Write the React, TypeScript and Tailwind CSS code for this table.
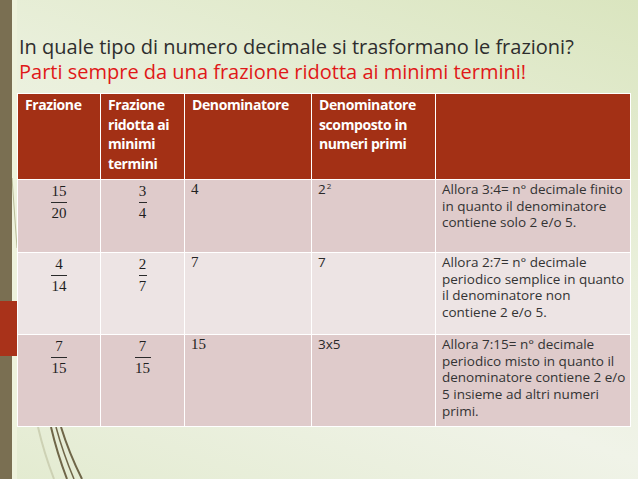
import React from "react";

type Frac = { n: string; d: string };

const ROWS: {
  a: Frac;
  b: Frac;
  den: string;
  scomp: React.ReactNode;
  note: string;
  bg: string;
  h: string;
}[] = [
  {
    a: { n: "15", d: "20" },
    b: { n: "3", d: "4" },
    den: "4",
    scomp: (
      <>
        2<span className="inline-block align-top text-[8px] leading-[10px] ml-[1px]">2</span>
      </>
    ),
    note: "Allora 3:4= n° decimale finito in quanto il denominatore contiene solo 2 e/o 5.",
    bg: "bg-[#dfcbcb]",
    h: "h-[73px]",
  },
  {
    a: { n: "4", d: "14" },
    b: { n: "2", d: "7" },
    den: "7",
    scomp: "7",
    note: "Allora 2:7= n° decimale periodico semplice in quanto il denominatore non contiene 2 e/o 5.",
    bg: "bg-[#ede4e4]",
    h: "h-[82px]",
  },
  {
    a: { n: "7", d: "15" },
    b: { n: "7", d: "15" },
    den: "15",
    scomp: "3x5",
    note: "Allora 7:15= n° decimale periodico misto in quanto il denominatore contiene 2 e/o 5 insieme ad altri numeri primi.",
    bg: "bg-[#dfcbcb]",
    h: "h-[92px]",
  },
];

function Fraction({ f }: { f: Frac }) {
  return (
    <div className="flex flex-col items-center text-[15px] text-[#1e1e1e] font-['Liberation_Serif',serif] pt-[4px]">
      <span className="leading-[15px]">{f.n}</span>
      <span className="block h-[1px] bg-[#2a2a2a] my-[3px] self-center" style={{ width: f.n.length > 1 || f.d.length > 1 ? 16 : 8 }} />
      <span className="leading-[15px]">{f.d}</span>
    </div>
  );
}

export default function App() {
  return (
    <div className="relative w-[638px] h-[479px] overflow-hidden flex bg-[linear-gradient(200deg,#dae5bf_0%,#eaf0dc_40%,#f0f3e8_65%,#e3ebd0_100%)]">
      {/* left decorative strip */}
      <div className="w-[12px] h-full bg-[#7a6f52] shrink-0" />
      <div className="w-[5px] h-full bg-[#eef2dc] shrink-0" />
      <div className="absolute left-0 top-[301px] w-[17px] h-[55px] bg-[#a9321a]" />
      <svg className="absolute left-[12px] top-[178px]" width="5" height="90" viewBox="0 0 5 90">
        <path d="M0 0 L5 70" stroke="#b8bc98" strokeWidth="1" fill="none" />
      </svg>
      <svg className="absolute left-0 top-[427px]" width="120" height="52" viewBox="0 0 120 52">
        <path d="M38 0 Q44 26 54 52" stroke="#cdd1b4" strokeWidth="2" fill="none" />
        <path d="M51 0 Q57 26 67 52" stroke="#6f6648" strokeWidth="2" fill="none" />
        <path d="M56 0 Q63 26 74 52" stroke="#6f6648" strokeWidth="1.5" fill="none" />
        <path d="M61 0 Q69 26 82 52" stroke="#6f6648" strokeWidth="2" fill="none" />
      </svg>

      <div className="flex flex-col pt-[34px]">
        <div className="pl-[2px] font-['Open_Sans',sans-serif] text-[20px] leading-[25px]">
          <p className="text-[#2e2e2e]">In quale tipo di numero decimale si trasformano le frazioni?</p>
          <p className="text-[#e01818]">Parti sempre da una frazione ridotta ai minimi termini!</p>
        </div>

        <table className="mt-[9px] border-collapse table-fixed w-[613px] font-['Open_Sans',sans-serif]">
          <colgroup>
            <col className="w-[83px]" />
            <col className="w-[84px]" />
            <col className="w-[127px]" />
            <col className="w-[124px]" />
            <col className="w-[195px]" />
          </colgroup>
          <thead>
            <tr className="h-[86px] bg-[#a33015] text-white">
              {[
                "Frazione",
                "Frazione ridotta ai minimi termini",
                "Denominatore",
                "Denominatore scomposto in numeri primi",
                "",
              ].map((t, i) => (
                <th
                  key={i}
                  className="align-top text-left font-bold text-[14px] leading-[19.5px] pl-[7px] pr-[4px] pt-[1px] border-[1.5px] border-white tracking-[-0.4px]"
                >
                  {t}
                </th>
              ))}
            </tr>
          </thead>
          <tbody>
            {ROWS.map((r, i) => (
              <tr key={i} className={`${r.bg} ${r.h}`}>
                <td className="align-top border-[1.5px] border-white">
                  <Fraction f={r.a} />
                </td>
                <td className="align-top border-[1.5px] border-white">
                  <Fraction f={r.b} />
                </td>
                <td className="align-top border-[1.5px] border-white px-[6px] pt-[1px] text-[15px] leading-[16px] text-[#222] font-['Liberation_Serif',serif]">
                  {r.den}
                </td>
                <td className="align-top border-[1.5px] border-white px-[6px] pt-[1px] text-[13.5px] leading-[16.7px] text-[#2a2a2a]">
                  {r.scomp}
                </td>
                <td className="align-top border-[1.5px] border-white pl-[6px] pr-[3px] pt-[1px] text-[13.5px] leading-[16.7px] text-[#333]">
                  {r.note}
                </td>
              </tr>
            ))}
          </tbody>
        </table>
      </div>
    </div>
  );
}
